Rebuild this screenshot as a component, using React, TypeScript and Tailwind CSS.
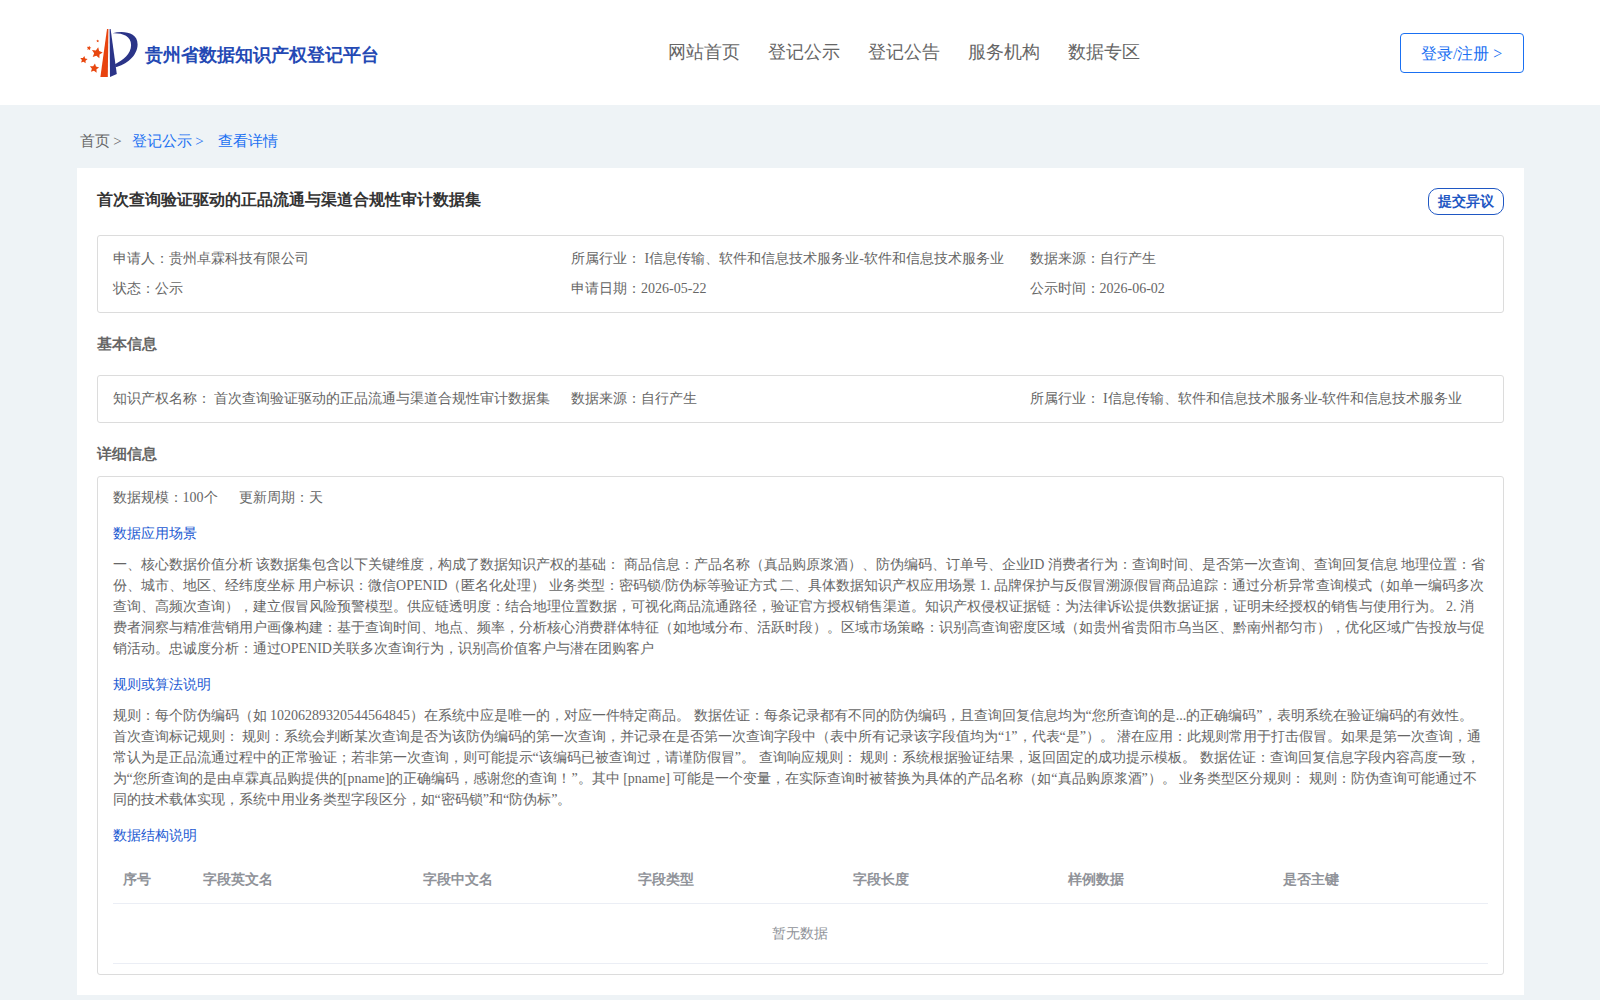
import type { ReactNode } from 'react'

const NAV = ['网站首页', '登记公示', '登记公告', '服务机构', '数据专区']

const SUMMARY = [
  '申请人：贵州卓霖科技有限公司',
  '所属行业： I信息传输、软件和信息技术服务业-软件和信息技术服务业',
  '数据来源：自行产生',
  '状态：公示',
  '申请日期：2026-05-22',
  '公示时间：2026-06-02',
]

const BASIC = [
  '知识产权名称： 首次查询验证驱动的正品流通与渠道合规性审计数据集',
  '数据来源：自行产生',
  '所属行业： I信息传输、软件和信息技术服务业-软件和信息技术服务业',
]

const COLUMNS = ['序号', '字段英文名', '字段中文名', '字段类型', '字段长度', '样例数据', '是否主键']

const SCENE =
  '一、核心数据价值分析 该数据集包含以下关键维度，构成了数据知识产权的基础： 商品信息：产品名称（真品购原浆酒）、防伪编码、订单号、企业ID 消费者行为：查询时间、是否第一次查询、查询回复信息 地理位置：省份、城市、地区、经纬度坐标 用户标识：微信OPENID（匿名化处理） 业务类型：密码锁/防伪标等验证方式 二、具体数据知识产权应用场景 1. 品牌保护与反假冒溯源假冒商品追踪：通过分析异常查询模式（如单一编码多次查询、高频次查询），建立假冒风险预警模型。供应链透明度：结合地理位置数据，可视化商品流通路径，验证官方授权销售渠道。知识产权侵权证据链：为法律诉讼提供数据证据，证明未经授权的销售与使用行为。 2. 消费者洞察与精准营销用户画像构建：基于查询时间、地点、频率，分析核心消费群体特征（如地域分布、活跃时段）。区域市场策略：识别高查询密度区域（如贵州省贵阳市乌当区、黔南州都匀市），优化区域广告投放与促销活动。忠诚度分析：通过OPENID关联多次查询行为，识别高价值客户与潜在团购客户'

const RULES =
  '规则：每个防伪编码（如 10206289320544564845）在系统中应是唯一的，对应一件特定商品。 数据佐证：每条记录都有不同的防伪编码，且查询回复信息均为“您所查询的是...的正确编码”，表明系统在验证编码的有效性。 首次查询标记规则： 规则：系统会判断某次查询是否为该防伪编码的第一次查询，并记录在是否第一次查询字段中（表中所有记录该字段值均为“1”，代表“是”）。 潜在应用：此规则常用于打击假冒。如果是第一次查询，通常认为是正品流通过程中的正常验证；若非第一次查询，则可能提示“该编码已被查询过，请谨防假冒”。 查询响应规则： 规则：系统根据验证结果，返回固定的成功提示模板。 数据佐证：查询回复信息字段内容高度一致，为“您所查询的是由卓霖真品购提供的[pname]的正确编码，感谢您的查询！”。其中 [pname] 可能是一个变量，在实际查询时被替换为具体的产品名称（如“真品购原浆酒”）。 业务类型区分规则： 规则：防伪查询可能通过不同的技术载体实现，系统中用业务类型字段区分，如“密码锁”和“防伪标”。'

function Star({ x, y, r, turn = 0 }: { x: number; y: number; r: number; turn?: number }) {
  return (
    <path
      transform={`translate(${x} ${y}) rotate(${turn}) scale(${r})`}
      d="M0-1 .29-.4 .95-.31 .47.15 .59.81 0 .5-.59.81-.47.15-.95-.31-.29-.4Z"
      fill="#e8470f"
    />
  )
}

function Logo() {
  return (
    <svg width="60" height="52" viewBox="0 0 60 52" aria-hidden>
      <path d="M27 1H28.4L27.8 49H20.4Z" fill="#e8430f" />
      <path d="M29.6 1H30.6L36.8 46 30 49Z" fill="#2b3488" />
      <path d="M32.5 5.2C43 2.5 57.8 4 57.6 16.5 57.4 28 46 37 35.4 39.2L35 36.2C43 32 51.1 26 51.1 17 51.1 7.5 42 4.8 32.5 5.2Z" fill="#2b3488" />
      <Star x={17} y={25} r={5.8} turn={12} />
      <Star x={14.3} y={40.3} r={4.9} turn={8} />
      <Star x={3.8} y={31.8} r={3.9} turn={8} />
      <Star x={9} y={20} r={2.4} turn={10} />
      <Star x={17.7} y={13} r={1.5} />
    </svg>
  )
}

function InfoGrid({ items }: { items: string[] }) {
  return (
    <div className="grid grid-cols-3 rounded-[3px] border border-[#dcdcdc] px-[15px] py-2 leading-[30px]">
      {items.map((item) => <div key={item} className="whitespace-nowrap">{item}</div>)}
    </div>
  )
}

function Detail({ title, children }: { title: string; children: ReactNode }) {
  return (
    <section className="mt-[15px]">
      <h3 className="mb-2.5 text-[#1c5ad2]">{title}</h3>
      {children}
    </section>
  )
}

export default function App() {
  return (
    <div className="h-[1000px] overflow-hidden bg-[#eef3f6] font-['Liberation_Serif',serif] text-sm leading-[21px] text-[#666]">
      <header className="flex h-[105px] justify-between bg-white pr-[76.4px] pl-[79.6px]">
        <div className="flex w-[588px] items-start pt-7">
          <Logo />
          <span className="mt-[13px] ml-[5px] text-lg leading-7 font-bold text-[#2449b4]">贵州省数据知识产权登记平台</span>
        </div>
        <nav className="flex flex-1 gap-7 pt-[38px] text-lg leading-7">
          {NAV.map((label) => <a key={label}>{label}</a>)}
        </nav>
        <button className="mt-[33px] h-10 w-[124px] rounded border border-[#1a70f2] pt-0.5 text-base text-[#1a70f2]">登录/注册 &gt;</button>
      </header>

      <div className="flex h-[63px] pt-[25px] pl-[79.6px] text-[15px] leading-[22px]">
        <span className="w-[52px]">首页 &gt;</span>
        <span className="w-[86px] text-[#1a70f2]">登记公示 &gt;</span>
        <span className="text-[#1a70f2]">查看详情</span>
      </div>

      <main className="mr-[76px] ml-[76.6px] h-[827px] bg-white px-5 pt-5">
        <div className="flex h-[47px] justify-between">
          <h1 className="text-base leading-6 font-bold text-[#333]">首次查询验证驱动的正品流通与渠道合规性审计数据集</h1>
          <button className="h-[27px] w-[76px] rounded-[10px] border border-[#1f57c3] font-bold text-[#1f57c3]">提交异议</button>
        </div>
        <InfoGrid items={SUMMARY} />

        <h2 className="h-[62px] pt-5 text-[15px] leading-[22px] font-bold">基本信息</h2>
        <InfoGrid items={BASIC} />

        <h2 className="h-[53px] pt-5 text-[15px] leading-[22px] font-bold">详细信息</h2>
        <div className="h-[499px] rounded-[3px] border border-[#dcdcdc] px-[15px] pt-2.5">
          <div className="flex gap-[21px]">
            <span>数据规模：100个</span>
            <span>更新周期：天</span>
          </div>
          <Detail title="数据应用场景">
            <p>{SCENE}</p>
          </Detail>
          <Detail title="规则或算法说明">
            <p>{RULES}</p>
          </Detail>
          <Detail title="数据结构说明">
            <div className="grid h-[48px] grid-cols-[80px_220px_repeat(5,215px)] border-b border-[#ebeef5] pt-[13px] font-bold text-[#909399]">
              {COLUMNS.map((column) => <span key={column} className="px-2.5">{column}</span>)}
            </div>
            <div className="h-[60px] border-b border-[#ebeef5] text-center leading-[60px] text-[#909399]">暂无数据</div>
          </Detail>
        </div>
      </main>
    </div>
  )
}
